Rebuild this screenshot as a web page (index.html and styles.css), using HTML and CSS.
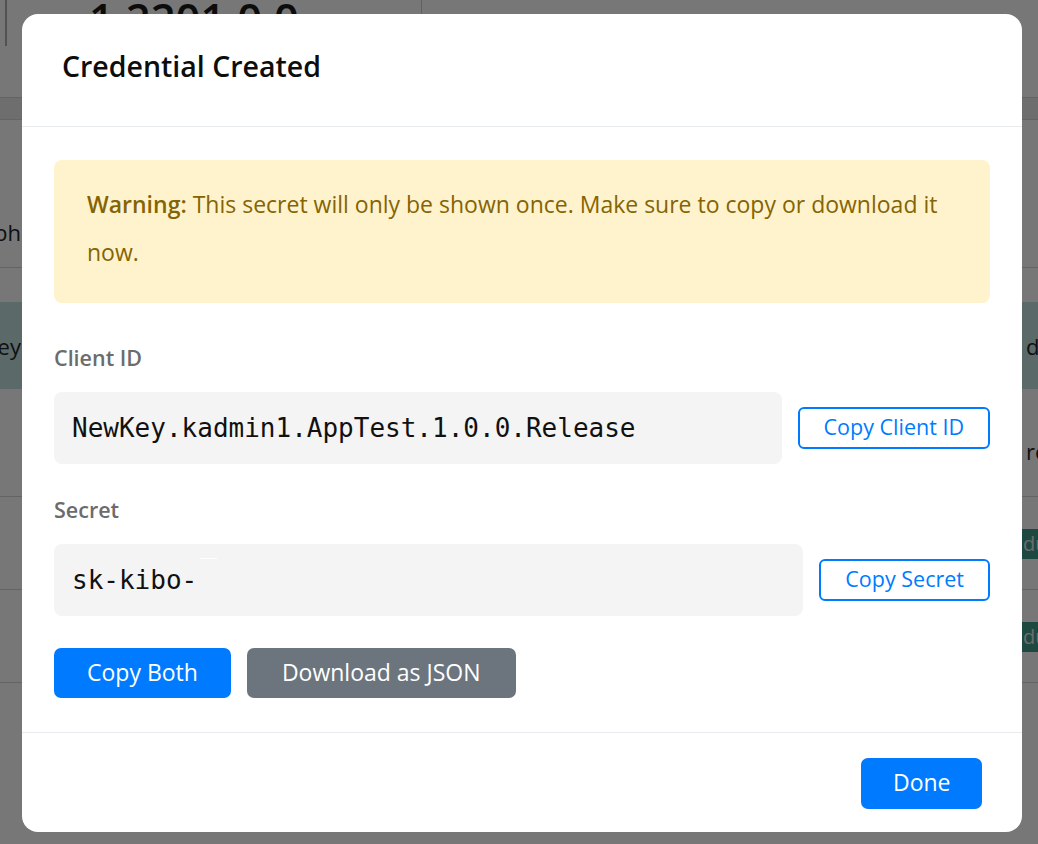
FILE: index.html
```html
<!DOCTYPE html>
<html lang="en">
<head>
<meta charset="utf-8">
<title>Credential Created</title>
<link rel="stylesheet" href="styles.css">
</head>
<body>
<div class="page">
  <div class="bg-head">
    <div class="bg-edge"></div>
    <div class="bg-version">1.2201.0.0</div>
    <div class="bg-headcell"></div>
  </div>
  <div class="bg-band"></div>
  <div class="bg-row bg-row-first">
    <div class="bg-left"><span>Graph</span></div>
    <div class="bg-right"></div>
  </div>
  <div class="bg-gap"></div>
  <div class="bg-row bg-row-sel">
    <div class="bg-left"><span>NewKey</span></div>
    <div class="bg-right"><span>d.</span></div>
  </div>
  <div class="bg-row bg-row-plain">
    <div class="bg-left"></div>
    <div class="bg-right"><span>rod</span></div>
  </div>
  <div class="bg-row bg-row-badge">
    <div class="bg-left"></div>
    <div class="bg-right"><span class="bg-badge">duction</span></div>
  </div>
  <div class="bg-row bg-row-badge">
    <div class="bg-left"></div>
    <div class="bg-right"><span class="bg-badge">duction</span></div>
  </div>
</div>

<div class="backdrop"></div>

<div class="modal" role="dialog" aria-labelledby="modal-title">
  <div class="modal-header">
    <h5 class="modal-title" id="modal-title">Credential Created</h5>
  </div>
  <div class="modal-body">
    <div class="alert">
      <strong>Warning:</strong> This secret will only be shown once. Make sure to copy or download it now.
    </div>

    <div class="field">
      <div class="field-label">Client ID</div>
      <div class="field-row">
        <code class="value">NewKey.kadmin1.AppTest.1.0.0.Release</code>
        <button class="btn btn-outline" type="button">Copy Client ID</button>
      </div>
    </div>

    <div class="field field-secret">
      <div class="field-label">Secret</div>
      <div class="field-row">
        <code class="value">sk-kibo-<span class="mask"></span></code>
        <button class="btn btn-outline" type="button">Copy Secret</button>
      </div>
    </div>

    <div class="actions">
      <button class="btn btn-primary" type="button">Copy Both</button>
      <button class="btn btn-secondary" type="button">Download as JSON</button>
    </div>
  </div>
  <div class="modal-footer">
    <button class="btn btn-primary btn-done" type="button">Done</button>
  </div>
</div>
</body>
</html>
```

FILE: styles.css
```css
* {
  box-sizing: border-box;
}

html, body {
  margin: 0;
  padding: 0;
}

body {
  width: 1038px;
  height: 844px;
  overflow: hidden;
  position: relative;
  background: #ffffff;
  font-family: "Open Sans", "Noto Sans", sans-serif;
  color: #212529;
}

/* ---------- background page ---------- */
.page {
  height: 844px;
  overflow: hidden;
}

.bg-head {
  display: flex;
  align-items: flex-start;
  height: 98px;
  border-bottom: 1px solid #d6d6d6;
}

.bg-edge {
  width: 7px;
  height: 46px;
  border-right: 2px solid #b0b0b0;
}

.bg-version {
  width: 415px;
  padding-left: 82px;
  margin-top: -6px;
  font-size: 43.5px;
  line-height: 50px;
  font-weight: 600;
  color: #1a1a1a;
  border-right: 1px solid #cfcfcf;
  height: 60px;
}

.bg-headcell {
  flex: 1;
}

.bg-band {
  height: 22px;
  background: #ebebeb;
  border-bottom: 1px solid #d6d6d6;
}

.bg-row {
  display: flex;
  justify-content: space-between;
  align-items: center;
  border-bottom: 1px solid #d6d6d6;
  font-size: 22px;
  color: #212529;
}

.bg-row-first {
  height: 148px;
  align-items: flex-end;
  padding-bottom: 20px;
}

.bg-gap {
  height: 34px;
}

.bg-row-sel {
  height: 87px;
  background: #c4e0e2;
  border-bottom: none;
}

.bg-row-plain {
  height: 108px;
  padding-top: 16px;
}

.bg-row-badge {
  height: 93px;
}

.bg-left {
  width: 21px;
  overflow: hidden;
  display: flex;
  justify-content: flex-end;
  white-space: nowrap;
}

.bg-right {
  width: 16px;
  overflow: hidden;
  white-space: nowrap;
}

.bg-row-sel .bg-right,
.bg-row-plain .bg-right {
  width: 12px;
}

.bg-badge {
  display: inline-block;
  background: #3f9c8c;
  color: #e6e6e6;
  font-size: 20px;
  line-height: 30px;
  padding: 0 0 0 1px;
}

/* ---------- backdrop ---------- */
.backdrop {
  position: absolute;
  inset: 0;
  background: rgba(0, 0, 0, 0.535);
}

/* ---------- modal ---------- */
.modal {
  position: absolute;
  top: 14px;
  left: 22px;
  width: 1000px;
  background: #ffffff;
  border-radius: 16px;
  overflow: hidden;
}

.modal-header {
  display: flex;
  align-items: center;
  height: 113px;
  padding: 0 40px 8px;
  border-bottom: 1px solid #e9ecef;
}

.modal-title {
  margin: 0;
  font-size: 28.5px;
  font-weight: 600;
  color: #0d0d0d;
  line-height: 1.2;
}

.modal-body {
  padding: 33px 32px 34px;
}

.alert {
  background: #fff3cd;
  color: #856404;
  border-radius: 8px;
  padding: 20px 33px 27px;
  font-size: 23px;
  line-height: 48px;
  margin-bottom: 38px;
}

.alert strong {
  font-weight: 600;
}

.field-label {
  font-size: 21.5px;
  font-weight: 600;
  color: #6c6c6c;
  line-height: 34px;
  margin-bottom: 17px;
}

.field-secret {
  margin-top: 29px;
}

.field-row {
  display: flex;
  align-items: center;
  gap: 16px;
}

.value {
  flex: 1;
  display: flex;
  align-items: center;
  height: 72px;
  padding: 0 18px;
  background: #f4f4f4;
  border-radius: 8px;
  font-family: "DejaVu Sans Mono", "Liberation Mono", monospace;
  font-size: 26px;
  color: #111111;
  white-space: nowrap;
  position: relative;
}

.mask {
  position: absolute;
  left: 146px;
  top: 14px;
  width: 17px;
  height: 1px;
  background: #ffffff;
}

.btn {
  font-family: "Open Sans", "Noto Sans", sans-serif;
  border: none;
  cursor: pointer;
  white-space: nowrap;
  padding-top: 0;
}

.btn-outline {
  height: 42px;
  padding: 0 24px 3px;
  background: #ffffff;
  border: 2px solid #007bff;
  border-radius: 6px;
  color: #007bff;
  font-size: 21.5px;
}

.actions {
  display: flex;
  gap: 16px;
  margin-top: 32px;
}

.btn-primary,
.btn-secondary {
  height: 50px;
  padding: 0 33px 3px;
  border-radius: 7px;
  color: #ffffff;
  font-size: 23px;
}

.btn-primary {
  background: #007bff;
}

.btn-secondary {
  background: #6c757d;
  padding: 0 35px 3px;
}

.modal-footer {
  display: flex;
  justify-content: flex-end;
  border-top: 1px solid #e9ecef;
  padding: 25px 40px 23px;
}

.btn-done {
  height: 51px;
  padding: 0 31.5px 4px;
}
```
